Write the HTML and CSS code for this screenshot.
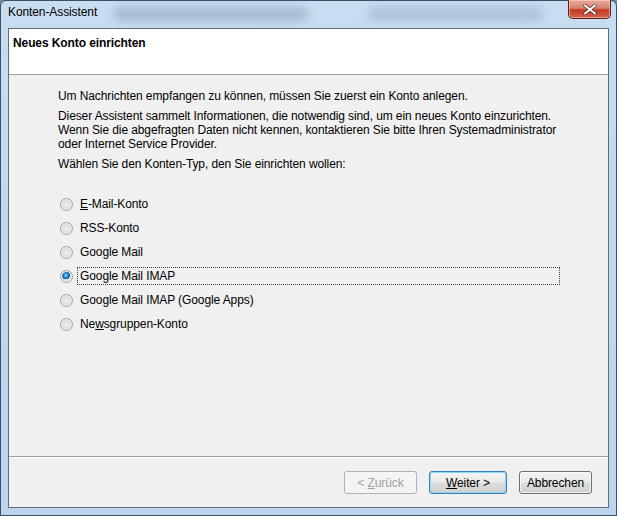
FILE: index.html
```html
<!DOCTYPE html>
<html lang="de">
<head>
    <meta charset="UTF-8">
    <title>Konten-Assistent</title>
    <link rel="stylesheet" href="styles.css">
</head>
<body>
    <div class="window">
        <div class="titlebar">
            <span class="title">Konten-Assistent</span>
            <span class="blur blur-a"></span>
            <span class="blur blur-b"></span>
            <button class="close" type="button" aria-label="Schließen">
                <svg width="14" height="11" viewBox="0 0 14 11">
                    <path d="M2 1.5 L12 9.5 M12 1.5 L2 9.5" stroke="#4a1a14" stroke-width="3.4" stroke-linecap="round"/>
                    <path d="M2 1.5 L12 9.5 M12 1.5 L2 9.5" stroke="#ffffff" stroke-width="2.2" stroke-linecap="round"/>
                </svg>
            </button>
        </div>

        <div class="client">
            <div class="header">
                <h1>Neues Konto einrichten</h1>
            </div>

            <div class="content">
                <p>Um Nachrichten empfangen zu können, müssen Sie zuerst ein Konto anlegen.</p>
                <p>Dieser Assistent sammelt Informationen, die notwendig sind, um ein neues Konto einzurichten.<br>
                Wenn Sie die abgefragten Daten nicht kennen, kontaktieren Sie bitte Ihren Systemadministrator<br>
                oder Internet Service Provider.</p>
                <p>Wählen Sie den Konten-Typ, den Sie einrichten wollen:</p>

                <div class="options">
                    <label class="option"><input type="radio" name="type"><span class="text"><u>E</u>-Mail-Konto</span></label>
                    <label class="option"><input type="radio" name="type"><span class="text">RSS-Konto</span></label>
                    <label class="option"><input type="radio" name="type"><span class="text">Google Mail</span></label>
                    <label class="option focused"><input type="radio" name="type" checked><span class="text">Google Mail IMAP</span></label>
                    <label class="option"><input type="radio" name="type"><span class="text">Google Mail IMAP (Google Apps)</span></label>
                    <label class="option"><input type="radio" name="type"><span class="text">Ne<u>w</u>sgruppen-Konto</span></label>
                </div>
            </div>

            <div class="footer">
                <button type="button" class="btn" disabled>&lt; <u>Z</u>urück</button>
                <button type="button" class="btn default"><u>W</u>eiter &gt;</button>
                <button type="button" class="btn cancel">Abbrechen</button>
            </div>
        </div>
    </div>
</body>
</html>
```

FILE: styles.css
```css
* {
    margin: 0;
    padding: 0;
    box-sizing: border-box;
}

body {
    width: 617px;
    height: 516px;
    overflow: hidden;
    font-family: 'Segoe UI', 'Liberation Sans', Arial, sans-serif;
    font-size: 12px;
    letter-spacing: -0.1px;
    color: #000;
    background: #6b8aa6;
}

.window {
    width: 617px;
    height: 516px;
    display: flex;
    flex-direction: column;
    padding: 0 7px 7px 7px;
    border: 1px solid #39506a;
    border-radius: 6px 6px 0 0;
    background: linear-gradient(180deg, #c9ddf1 0%, #c2d8ee 40%, #bcd4ec 100%);
}

.titlebar {
    position: relative;
    height: 27px;
    flex: none;
}

.title {
    position: relative;
    z-index: 1;
    display: block;
    padding-top: 4px;
    font-size: 12px;
    color: #000;
}

.blur {
    position: absolute;
    top: 6px;
    height: 14px;
    border-radius: 8px;
    filter: blur(5px);
    background: rgba(120, 145, 175, 0.45);
}

.blur-a {
    left: 105px;
    width: 195px;
}

.blur-b {
    left: 360px;
    width: 175px;
    background: rgba(120, 145, 175, 0.35);
}

.close {
    position: absolute;
    top: -1px;
    right: -2px;
    width: 43px;
    height: 19px;
    border: 1px solid #5a1e16;
    border-top: none;
    border-radius: 0 0 5px 5px;
    background: linear-gradient(180deg, #e8a99d 0%, #d8826f 45%, #c23a24 55%, #d2644a 100%);
    box-shadow: inset 0 0 0 1px rgba(255, 220, 210, 0.5);
    display: flex;
    align-items: center;
    justify-content: center;
}

.client {
    flex: 1;
    display: flex;
    flex-direction: column;
    border: 1px solid #5f6f80;
    background: #f0f0f0;
}

.header {
    height: 46px;
    flex: none;
    background: #fff;
    border-bottom: 1px solid #a0a0a0;
    padding: 7px 0 0 4px;
}

h1 {
    font-size: 12px;
    font-weight: bold;
}

.content {
    flex: 1;
    padding: 14px 0 0 49px;
}

p {
    line-height: 14px;
    margin-bottom: 6px;
}

.options {
    margin-top: 21px;
}

.option {
    display: flex;
    align-items: center;
    height: 24px;
}

.option input {
    appearance: none;
    -webkit-appearance: none;
    width: 13px;
    height: 13px;
    margin: 0 4px 0 2px;
    border-radius: 50%;
    border: 1px solid #a0a0a0;
    background: radial-gradient(circle at 50% 50%, #f2f2f2 0%, #dedede 50%, #c8c8c8 100%);
    box-shadow: inset 0 0 0 1px #f6f6f6;
    flex: none;
}

.option input:checked {
    background:
        radial-gradient(circle at 45% 40%, #8fd2ff 0%, #1f86cf 28%, #0b4f8c 44%, transparent 46%),
        radial-gradient(circle at 50% 50%, #f2f2f2 0%, #dedede 50%, #c8c8c8 100%);
}

.option .text {
    display: block;
    padding: 1px 2px;
    border: 1px solid transparent;
    line-height: 14px;
}

.option.focused .text {
    border: 1px dotted #404040;
    width: 483px;
}

.footer {
    height: 51px;
    flex: none;
    border-top: 1px solid #a0a0a0;
    display: flex;
    align-items: flex-start;
    justify-content: flex-end;
    gap: 12px;
    padding: 14px 16px 0 0;
    box-shadow: inset 0 1px 0 #fff;
}

.btn {
    width: 73px;
    height: 23px;
    font-family: inherit;
    font-size: 12px;
    letter-spacing: inherit;
    color: #000;
    border: 1px solid #707070;
    border-radius: 3px;
    background: linear-gradient(180deg, #f2f2f2 0%, #ebebeb 48%, #dddddd 52%, #cfcfcf 100%);
    box-shadow: inset 0 0 0 1px rgba(255, 255, 255, 0.7);
}

.btn[disabled] {
    color: #a0a0a0;
    border-color: #adb2b5;
    background: #f4f4f4;
    box-shadow: none;
}

.btn.default {
    width: 78px;
    border-color: #3c7fb1;
    box-shadow: inset 0 0 0 1px #8fd6f6;
}

.btn.cancel {
    width: 73px;
}
```
